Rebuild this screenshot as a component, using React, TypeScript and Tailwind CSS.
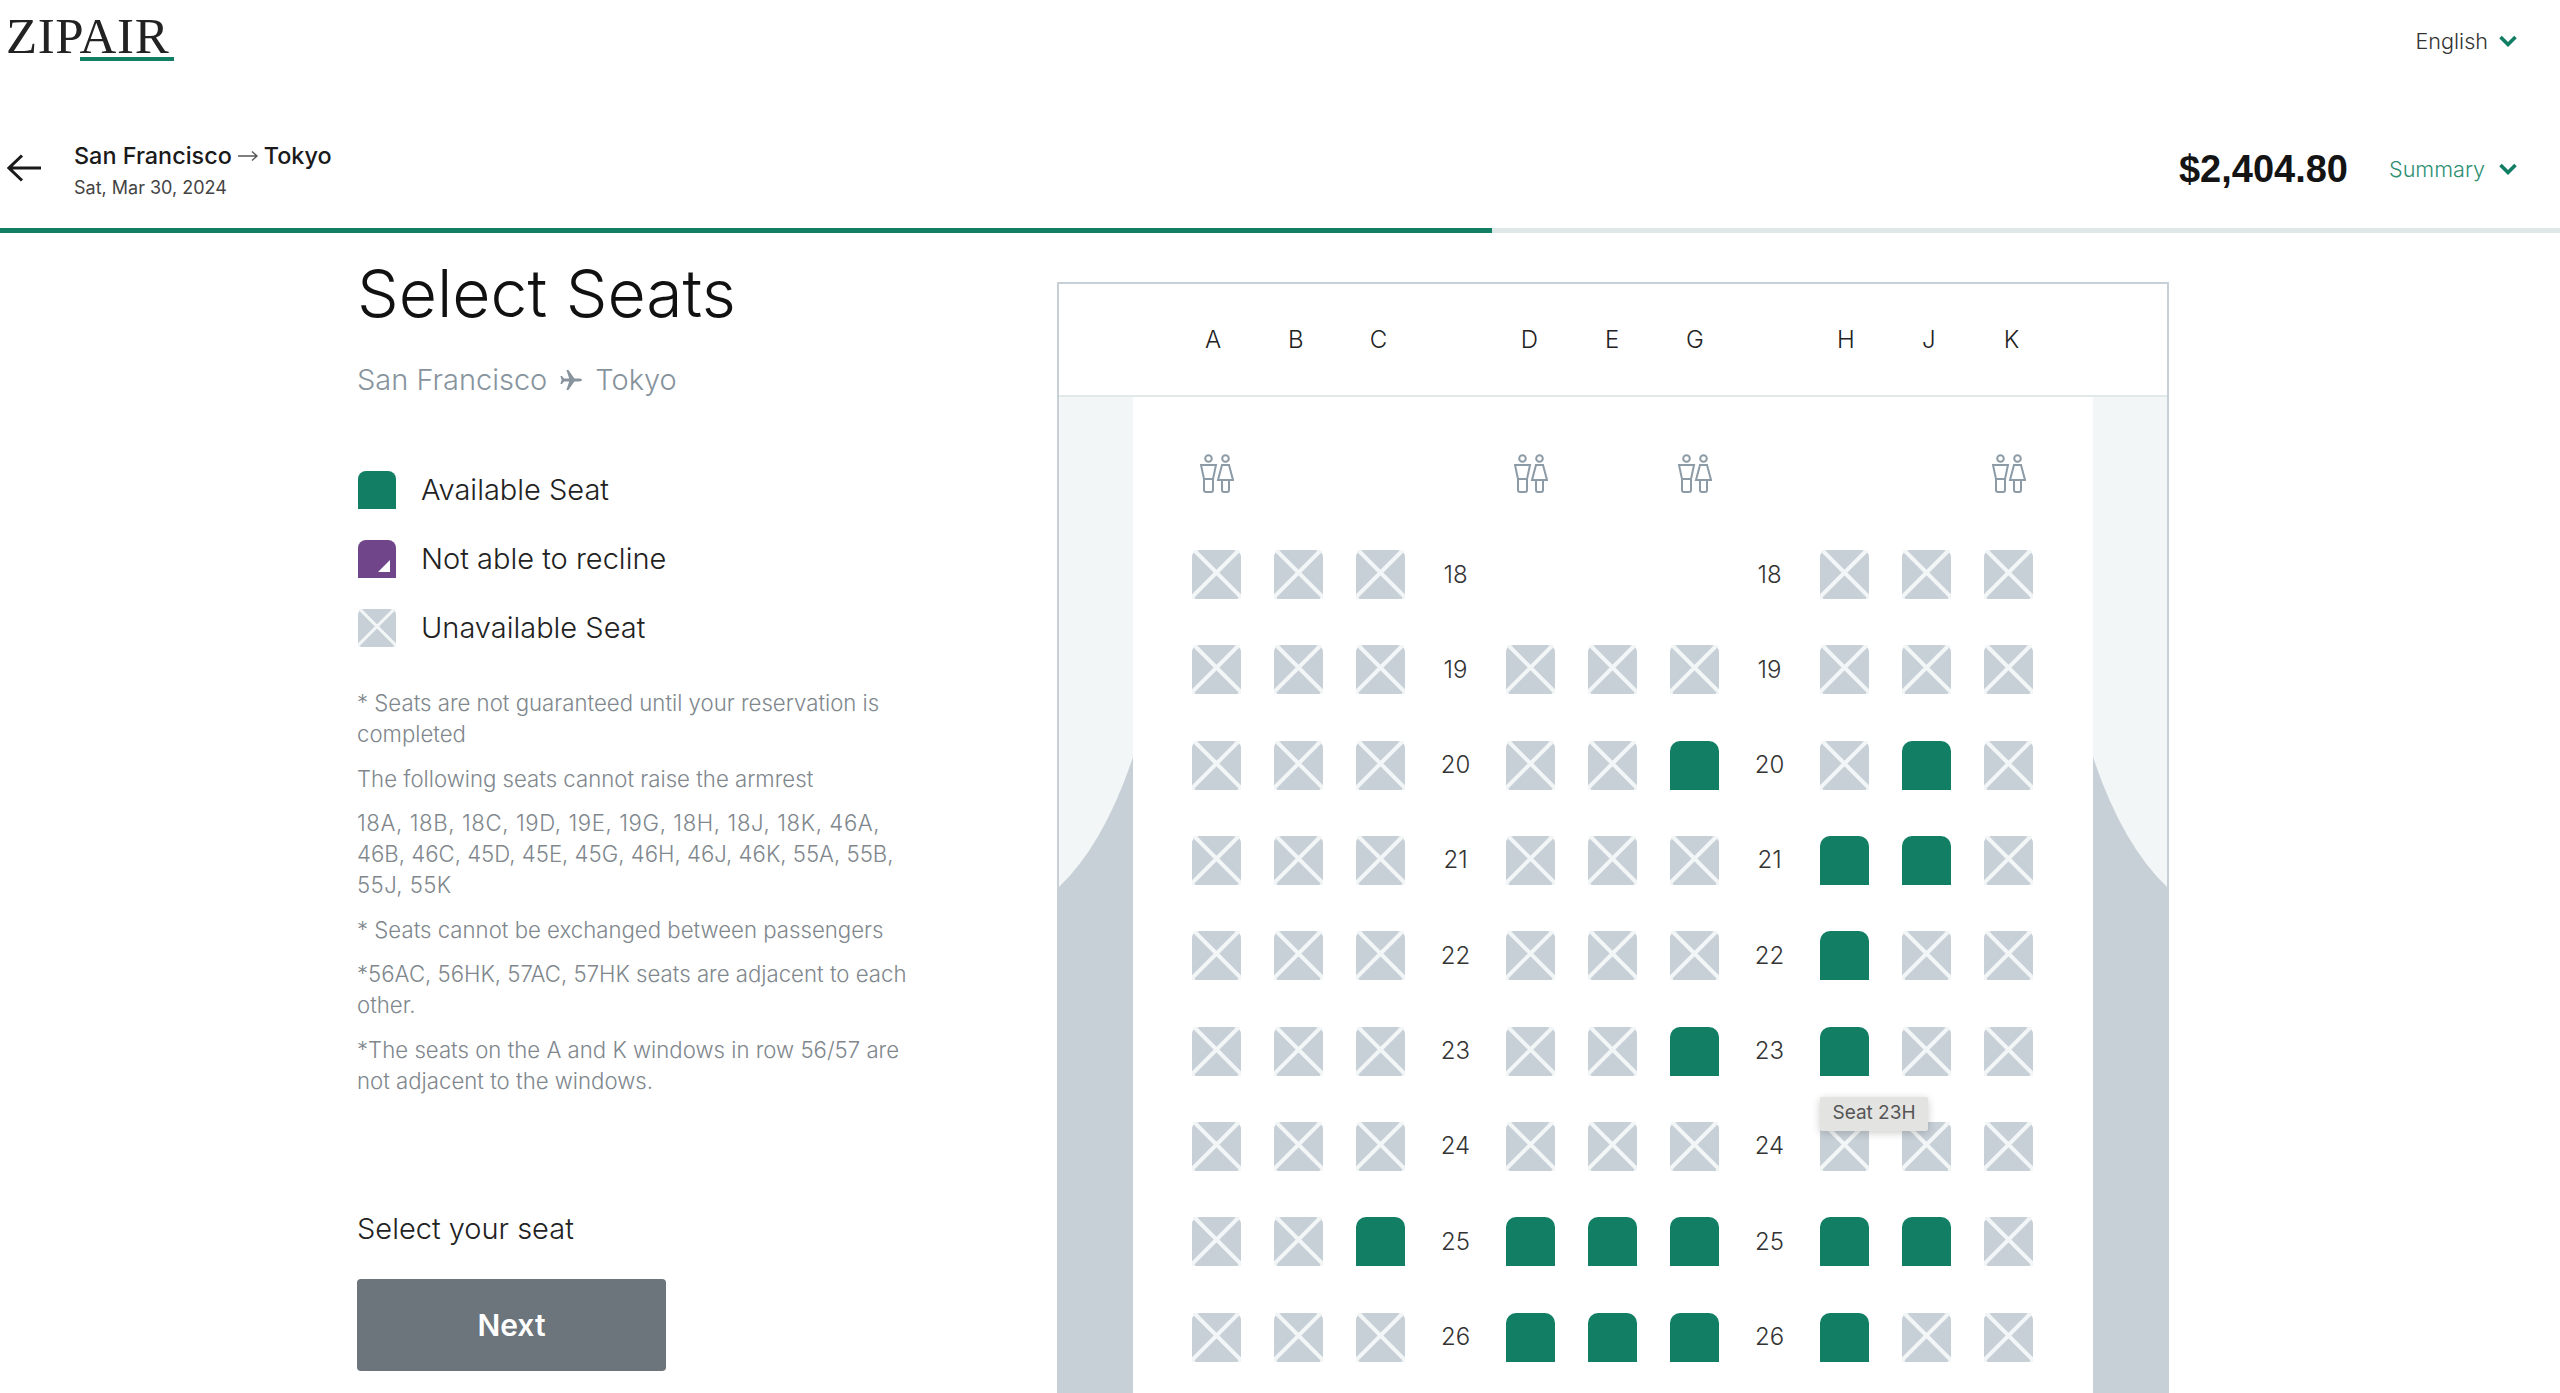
const FONT = "font-['Inter','Noto_Sans_CJK_JP',sans-serif]";

type Status = 'x' | 'a' | null;

const rows: { label: number; seats: Status[] }[] = [
  { label: 18, seats: ['x', 'x', 'x', null, null, null, 'x', 'x', 'x'] },
  { label: 19, seats: ['x', 'x', 'x', 'x', 'x', 'x', 'x', 'x', 'x'] },
  { label: 20, seats: ['x', 'x', 'x', 'x', 'x', 'a', 'x', 'a', 'x'] },
  { label: 21, seats: ['x', 'x', 'x', 'x', 'x', 'x', 'a', 'a', 'x'] },
  { label: 22, seats: ['x', 'x', 'x', 'x', 'x', 'x', 'a', 'x', 'x'] },
  { label: 23, seats: ['x', 'x', 'x', 'x', 'x', 'a', 'a', 'x', 'x'] },
  { label: 24, seats: ['x', 'x', 'x', 'x', 'x', 'x', 'x', 'x', 'x'] },
  { label: 25, seats: ['x', 'x', 'a', 'a', 'a', 'a', 'a', 'a', 'x'] },
  { label: 26, seats: ['x', 'x', 'x', 'a', 'a', 'a', 'a', 'x', 'x'] },
];

function Chevron() {
  return (
    <svg width="18" height="12" viewBox="0 0 18 12" fill="none" stroke="#127f65" strokeWidth="3.6">
      <path d="M1.5 2 L9 9.5 L16.5 2" />
    </svg>
  );
}

function Unavailable({ size = 49 }: { size?: number }) {
  return (
    <svg width={size} height={size} viewBox="0 0 49 49" className="block">
      <path d="M8 0 H41 Q49 0 49 8 V49 H0 V8 Q0 0 8 0 Z" fill="#c7d0d7" />
      <path d="M2 0 L49 47 M47 0 L0 47 M0 49 L2 47 M49 49 L47 47" stroke="#f3f6f6" strokeWidth="4" />
    </svg>
  );
}

function Toilet() {
  return (
    <svg width="34" height="39" viewBox="0 0 34 39" fill="none" stroke="#8c9ba6" strokeWidth="2" className="block">
      <circle cx="8.5" cy="4.5" r="3.3" />
      <circle cx="25.5" cy="4.5" r="3.3" />
      <path d="M1 11 H16 L13 25 V36 Q13 38 11 38 H6 Q4 38 4 36 V25 Z" />
      <path d="M4 25 H13" />
      <path d="M22 11 H29 L33 26 H18 Z" />
      <path d="M22 26 V36 Q22 38 24 38 H27 Q29 38 29 36 V26" />
    </svg>
  );
}

function Side({ flip }: { flip?: boolean }) {
  return (
    <svg width="74" height="996" viewBox="0 0 74 996" className={`block shrink-0 bg-[#f3f6f6] ${flip ? '-scale-x-100' : ''}`}>
      <path d="M74 360 Q45 447 0 490 V996 H74 Z" fill="#c7d0d7" />
    </svg>
  );
}

function Seat({ status, tooltip }: { status: Status; tooltip?: string }) {
  return (
    <div className="relative h-[49px] w-[49px]">
      {status === 'x' && <Unavailable />}
      {status === 'a' && <div className="h-[49px] w-[49px] rounded-t-[10px] bg-[#127f65]" />}
      {tooltip && (
        <div className="absolute left-0 top-[70px] z-10 flex h-[34px] w-[108px] items-center justify-center whitespace-nowrap rounded-[2px] bg-[#e3e3e1] text-[19px] font-normal text-[#555555] shadow-[0_2px_8px_rgba(0,0,0,0.2)]">
          {tooltip}
        </div>
      )}
    </div>
  );
}

function SeatGroup({ children }: { children: React.ReactNode }) {
  return <div className="flex gap-[33px]">{children}</div>;
}

function Row({ label, seats }: { label: number; seats: Status[] }) {
  const cell = (i: number) => (
    <Seat key={i} status={seats[i]} tooltip={label === 23 && i === 6 ? 'Seat 23H' : undefined} />
  );
  return (
    <div className="flex items-center">
      <SeatGroup>{[0, 1, 2].map(cell)}</SeatGroup>
      <div className="w-[101px] text-center text-[24px] text-[#333333]">{label}</div>
      <SeatGroup>{[3, 4, 5].map(cell)}</SeatGroup>
      <div className="w-[101px] text-center text-[24px] text-[#333333]">{label}</div>
      <SeatGroup>{[6, 7, 8].map(cell)}</SeatGroup>
    </div>
  );
}

function ColumnLetters() {
  const group = (letters: string[]) => (
    <div className="flex gap-[33.75px]">
      {letters.map((l) => (
        <div key={l} className="w-[49px] text-center text-[24px] text-[#222222]">
          {l}
        </div>
      ))}
    </div>
  );
  return (
    <div className="flex h-[113px] items-center border-b-2 border-[#e1e8e8] pl-[129.5px]">
      {group(['A', 'B', 'C'])}
      <div className="w-[102px]" />
      {group(['D', 'E', 'G'])}
      <div className="w-[102px]" />
      {group(['H', 'J', 'K'])}
    </div>
  );
}

function ToiletRow() {
  const spot = (show: boolean, i: number) => (
    <div key={i} className="flex w-[49px] justify-center">
      {show && <Toilet />}
    </div>
  );
  return (
    <div className="mb-[57px] flex">
      <SeatGroup>{[true, false, false].map(spot)}</SeatGroup>
      <div className="w-[101px]" />
      <SeatGroup>{[true, false, true].map(spot)}</SeatGroup>
      <div className="w-[101px]" />
      <SeatGroup>{[false, false, true].map(spot)}</SeatGroup>
    </div>
  );
}

function SeatMap() {
  return (
    <div className="ml-[700px] mt-[49px] h-[1111px] w-[1112px] shrink-0 overflow-hidden border-x-2 border-t-2 border-[#c7d0d7]">
      <ColumnLetters />
      <div className="flex">
        <Side />
        <div className="w-[961px] pl-[59px] pt-[57px]">
          <ToiletRow />
          <div className="flex flex-col gap-[46.33px]">
            {rows.map((r) => (
              <Row key={r.label} label={r.label} seats={r.seats} />
            ))}
          </div>
        </div>
        <Side flip />
      </div>
    </div>
  );
}

function Legend() {
  return (
    <div className="mt-[73px] flex flex-col gap-[31px] text-[29px] leading-[38px] text-[#222222]">
      <div className="flex items-center gap-[25px] pl-[1px]">
        <div className="h-[38px] w-[38px] rounded-t-[8px] bg-[#127f65]" />
        Available Seat
      </div>
      <div className="flex items-center gap-[25px] pl-[1px]">
        <div className="relative h-[38px] w-[38px] rounded-t-[8px] bg-[#70458a]">
          <div className="absolute bottom-[6px] right-[6px] h-0 w-0 border-b-[12px] border-l-[12px] border-b-white border-l-transparent" />
        </div>
        Not able to recline
      </div>
      <div className="flex items-center gap-[25px] pl-[1px]">
        <Unavailable size={38} />
        Unavailable Seat
      </div>
    </div>
  );
}

function LeftColumn() {
  return (
    <div className="absolute left-[357px] top-[233px] w-[560px]">
      <h1 className="mt-[22px] text-[66px] font-light leading-[76px] text-[#111111]">Select Seats</h1>
      <div className="mt-[31px] flex items-center gap-[12px] text-[29px] font-light leading-[36px] text-[#87949d]">
        San Francisco
        <svg width="24" height="24" viewBox="0 0 24 24" fill="#87949d">
          <path d="M23 12 Q23 10.6 20 10.6 H15.4 L9.4 2 H7.4 L10.2 10.6 H5 L3 8 H1.4 L2.6 12 L1.4 16 H3 L5 13.4 H10.2 L7.4 22 H9.4 L15.4 13.4 H20 Q23 13.4 23 12 Z" />
        </svg>
        Tokyo
      </div>
      <Legend />
      <div className="mt-[40px] flex flex-col gap-[13.6px] text-[22.2px] leading-[31px] text-[#80878d]">
        <p>* Seats are not guaranteed until your reservation is completed</p>
        <p>The following seats cannot raise the armrest</p>
        <p>
          <span className="tracking-[0.6px]">18A, 18B, 18C, 19D, 19E, 19G, 18H, 18J, 18K, 46A,</span>
          <br />
          <span>46B, 46C, 45D, 45E, 45G, 46H, 46J, 46K, 55A, 55B,</span>
          <br />
          <span className="tracking-[0.4px]">55J, 55K</span>
        </p>
        <p>* Seats cannot be exchanged between passengers</p>
        <p>*56AC, 56HK, 57AC, 57HK seats are adjacent to each other.</p>
        <p>*The seats on the A and K windows in row 56/57 are not adjacent to the windows.</p>
      </div>
      <div className="absolute left-0 top-[976px] text-[29px] leading-[40px] text-[#222222]">Select your seat</div>
      <button className="absolute left-0 top-[1046px] h-[92px] w-[309px] rounded-[4px] bg-[#6c747c] text-[30px] font-semibold text-white">
        Next
      </button>
    </div>
  );
}

export default function App() {
  return (
    <div className={`relative h-[1393px] w-[2560px] overflow-hidden bg-white font-[350] ${FONT}`}>
      <header className="h-[228px]">
        <div className="flex h-[80px] items-start justify-between pl-[6px] pr-[43px]">
          <div className="relative mt-[7px] font-['Liberation_Serif',serif] text-[51px] font-normal leading-[58px] tracking-[0.6px] text-[#222222]">
            ZIPAIR
            <div className="absolute left-[74px] top-[50px] h-[4px] w-[94px] bg-[#127f65]" />
          </div>
          <div className="mt-[26px] flex items-center gap-[11px] text-[21.6px] leading-[30px] text-[#333333]">
            English
            <Chevron />
          </div>
        </div>
        <div className="flex h-[148px] items-start justify-between pl-[7px] pr-[43px]">
          <div className="flex items-start gap-[33px]">
            <svg width="34" height="28" viewBox="0 0 34 28" fill="none" stroke="#1a1a1a" strokeWidth="3" className="mt-[74px]">
              <path d="M34 14 H2 M15 1.5 L2 14 L15 26.5" />
            </svg>
            <div className="mt-[60px]">
              <div className="flex items-center text-[23.4px] font-medium leading-[32px] text-[#1a1a1a]">
                San Francisco
                <svg width="20" height="12" viewBox="0 0 20 12" fill="none" stroke="#555555" strokeWidth="1.4" className="mx-[6px]">
                  <path d="M0 6 H19 M14 1.5 L19 6 L14 10.5" />
                </svg>
                Tokyo
              </div>
              <div className="mt-[4px] text-[18px] font-normal leading-[24px] text-[#444444]">Sat, Mar 30, 2024</div>
            </div>
          </div>
          <div className="mt-[67px] flex items-center">
            <div className="font-['Liberation_Sans',sans-serif] text-[38px] font-bold leading-[44px] text-[#141414]">$2,404.80</div>
            <div className="ml-[41px] text-[21.6px] text-[#2f8f73]">Summary</div>
            <div className="ml-[14px]">
              <Chevron />
            </div>
          </div>
        </div>
      </header>
      <div className="h-[5px] bg-[#dfe8e6]">
        <div className="h-[5px] w-[1492px] bg-[#127f65]" />
      </div>
      <main className="flex">
        <div className="w-[357px] shrink-0" />
        <SeatMap />
      </main>
      <LeftColumn />
    </div>
  );
}
